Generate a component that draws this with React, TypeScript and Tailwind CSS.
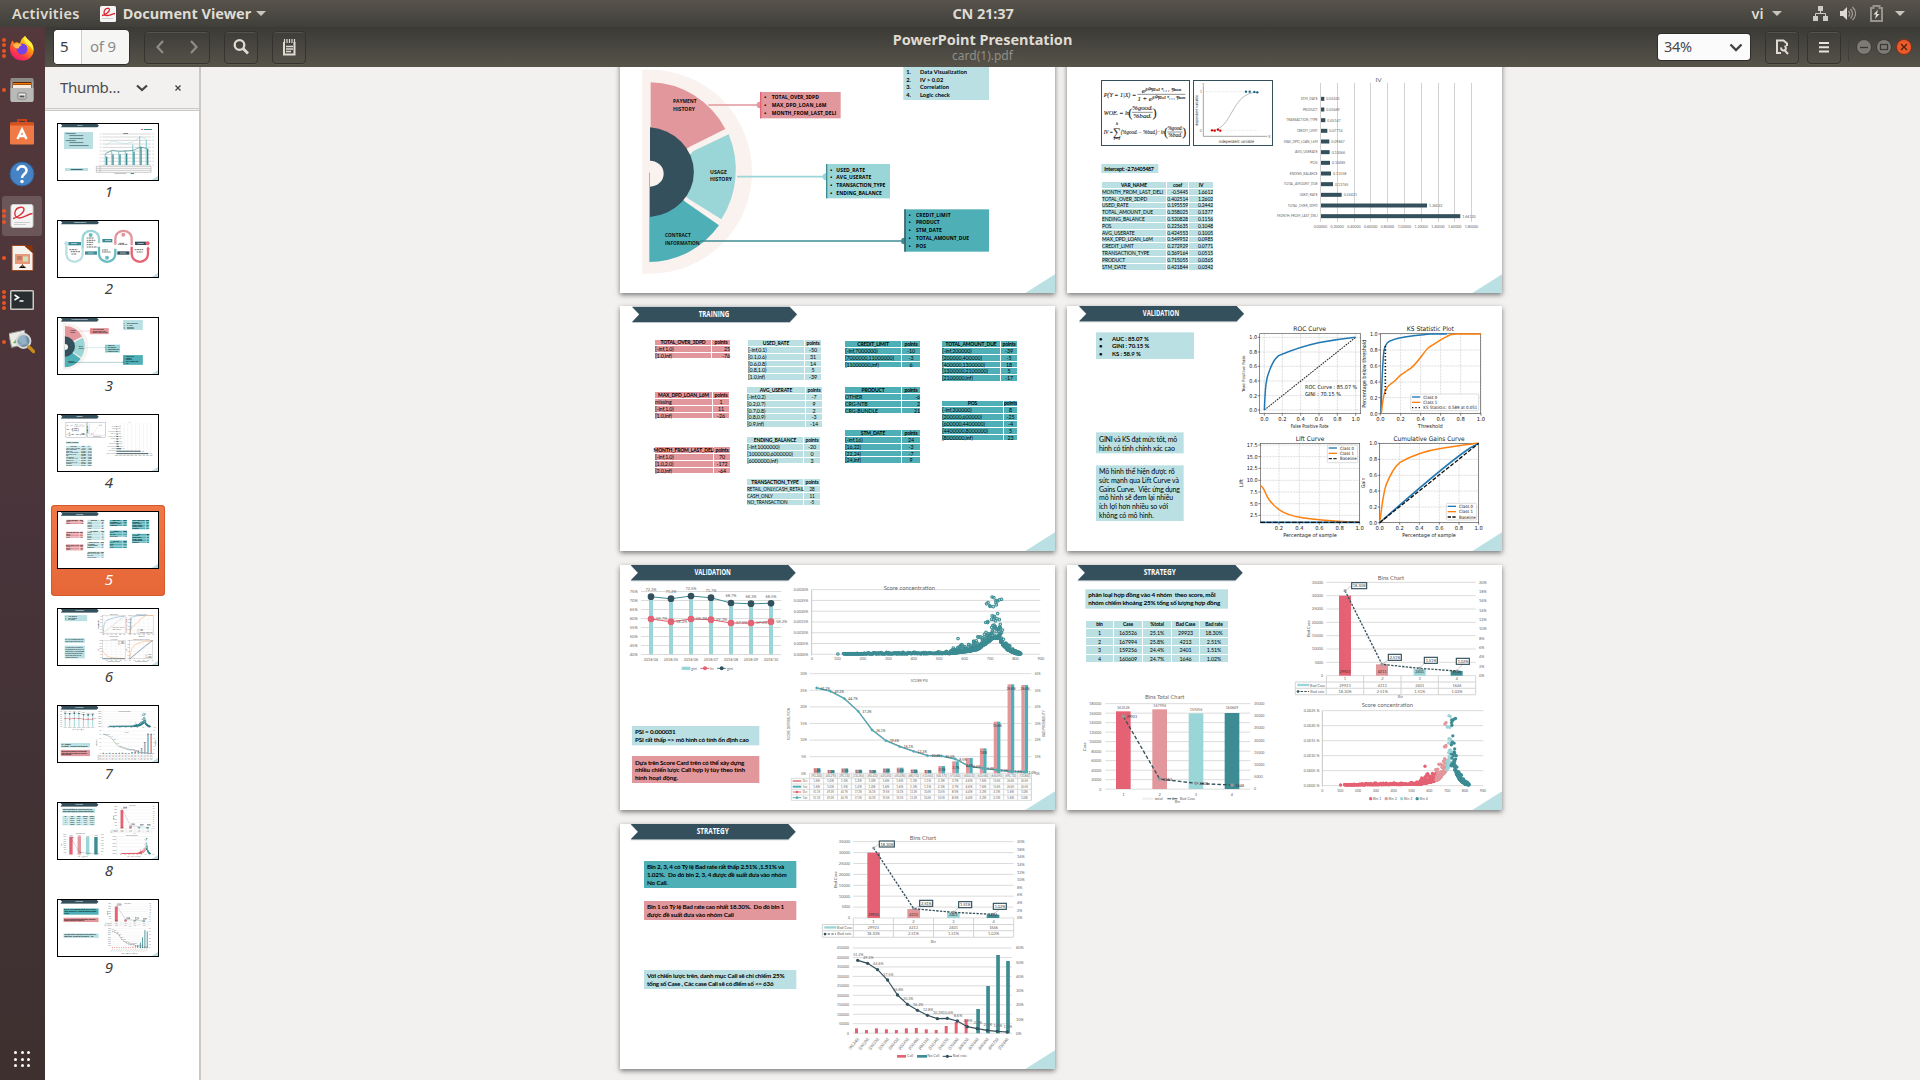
import React, { useLayoutEffect, useRef } from 'react';

const DARK = '#34505c';
const TEAL = '#4fafb7';
const LIGHT = '#bbe0e3';
const MID = '#9ad5d7';
const PINK = '#e2979c';
const RED = '#e46274';
const DEEP = '#3d8c93';
const GRID = '#d4d4d4';

/* Text whose letter spacing is adjusted so that it fills a given width. */
function Fit({ w, className = '', children }: { w?: number; className?: string; children: string }) {
  const ref = useRef<HTMLSpanElement>(null);
  useLayoutEffect(() => {
    const el = ref.current;
    if (!el || !w) return;
    el.style.letterSpacing = '0px';
    const spacing = (w - el.offsetWidth) / children.length;
    el.style.letterSpacing = `${spacing}px`;
  }, [w, children]);
  return (
    <span ref={ref} className={`inline-block whitespace-pre ${className}`}>
      {children}
    </span>
  );
}

type TProps = {
  x: number; y: number; s?: number; w?: number; a?: 'start' | 'middle' | 'end';
  b?: boolean; f?: string; r?: number; font?: string; i?: boolean; children: React.ReactNode;
};
function T({ x, y, s = 13, w, a = 'middle', b, f = '#666', r, font, i, children }: TProps) {
  return (
    <text x={x} y={y + s * 0.35} fontSize={s} textAnchor={a} fontWeight={b ? 700 : 400} fill={f} textLength={w}
      lengthAdjust="spacingAndGlyphs" fontStyle={i ? 'italic' : undefined} fontFamily={font}
      transform={r ? `rotate(${r} ${x} ${y})` : undefined}>
      {children}
    </text>
  );
}

/* ---------- slide building blocks ---------- */

function Canvas({ ox, oy, children }: { ox: number; oy: number; children: React.ReactNode }) {
  return (
    <div className="relative h-[735px] w-[1305px] overflow-hidden bg-white font-['Lato','Noto_Sans',sans-serif] text-black">
      <div className="absolute" style={{ left: -ox, top: -oy }}>{children}</div>
      <svg className="absolute right-0 bottom-0" width="89" height="56"><path d="M0 56 89 0V56Z" fill={LIGHT} /></svg>
    </div>
  );
}

function Art({ children }: { children: React.ReactNode }) {
  return (
    <svg className="absolute top-0 left-0 overflow-visible" width="1340" height="780" fontFamily="Lato, 'Noto Sans', sans-serif">
      {children}
    </svg>
  );
}

function Banner({ x, y, w, children }: { x: number; y: number; w: number; children: string }) {
  return (
    <>
      <path d={`M${x} ${y + 2}h473l22 23-22 24H${x}l22-24Z`} fill="#8d9ca3" opacity=".6" />
      <path d={`M${x} ${y}h473l22 23-22 23H${x}l22-23Z`} fill={DARK} />
      <T x={x + 246} y={y + 23} s={24} w={w} b f="#fff" font="'Open Sans'">{children}</T>
    </>
  );
}

type Line = [string, number];
function Box({ x, y, w, h, bg, lines, size, lh, pt, bold, bullets, indent = 0, className = '' }: {
  x: number; y: number; w: number; h: number; bg: string; lines: Line[]; size: number; lh: number; pt: number;
  bold?: boolean; bullets?: string[]; indent?: number; className?: string;
}) {
  return (
    <div className={`absolute ${className}`} style={{ left: x, top: y, width: w, height: h, background: bg, paddingTop: pt, fontSize: size, lineHeight: `${lh}px` }}>
      {lines.map(([t, tw], i) => (
        <div key={i} className={`flex pl-[9px] ${bold ? 'font-bold' : ''}`} style={{ height: lh }}>
          {bullets && <span className="shrink-0" style={{ width: indent }}>{bullets[i]}</span>}
          {t && <Fit w={tw}>{t}</Fit>}
        </div>
      ))}
    </div>
  );
}

const snap = (v: number) => Math.round(v / 3) * 3;

/* Table whose row and column edges fall on whole device pixels of the page view. */
function Grid({ x, y, cols, bg, head, rows, hh = 18, rh = 17.4, align = 'center', size = 16 }: {
  x: number; y: number; cols: number[]; bg: string; head: string[]; rows: string[][]; hh?: number; rh?: number; align?: string; size?: number;
}) {
  const tops = Array.from({ length: rows.length + 2 }, (_, i) => (i === 0 ? 0 : snap(hh + 3 + (rh + 3) * (i - 1))));
  const heights = tops.slice(1).map((t, i) => `${t - tops[i] - 3}px`).join(' ');
  return (
    <div className="absolute grid gap-[3px] leading-none" style={{ left: snap(x), top: snap(y), fontSize: size, gridTemplateColumns: cols.map((c) => `${snap(c)}px`).join(' '), gridTemplateRows: heights }}>
      {head.map((c, i) => (
        <div key={i} className="flex items-center justify-center text-[15px] font-bold whitespace-nowrap tracking-[-0.45px]" style={{ background: bg }}>{c}</div>
      ))}
      {rows.flatMap((r, j) => r.map((c, i) => (
        <div key={`${j}-${i}`} className="flex items-center whitespace-nowrap tracking-[-0.3px]" style={{ background: bg, justifyContent: i === 0 && align !== 'all' ? 'start' : align === 'right' ? 'end' : 'center' }}>{c}</div>
      )))}
    </div>
  );
}

/* ---------- slides ---------- */

function Slide1() {
  const xs = [318, 337, 358, 378, 400, 421, 441];
  return (
    <Canvas ox={0} oy={0}>
      <Art>
        <g transform="scale(4.35) translate(-174 -372)">
          <path d="M182 372h110l5 5-5 5H182l5-5Z" fill={DARK} />
          <T x={240} y={377} s={6} b f="#fff">DATA</T>
          <rect x={192} y={396} width={87} height={51} fill={LIGHT} />
          {[401, 407, 415, 422, 428, 437].map((y, i) => <rect key={y} x={i % 3 ? 208 : 197} y={y - 1} width={i === 5 ? 58 : i % 3 ? 42 : 30} height={2.2} fill="#40656a" />)}
          <rect x={195} y={504} width={69} height={9} fill={LIGHT} />
          <rect x={212} y={507} width={36} height={3} fill="#40656a" />
          <rect x={423} y={387} width={7} height={3} fill={RED} /><rect x={432} y={387} width={24} height={3} fill={DEEP} />
          {[402, 411, 421, 432, 442, 453, 463, 474, 484, 495].map((y) => <path key={y} d={`M307 ${y}H453M299 ${y}h5M457 ${y}h5`} stroke="#b5b5b5" strokeWidth="1.600" />)}
          <rect x={370} y={399} width={14} height={3} fill="#888" />
          {xs.map((x, i) => (
            <g key={x}><rect x={x - 4} y={[462, 452, 455, 450, 434, 408, 420][i]} width={4} height={495 - [462, 452, 455, 450, 434, 408, 420][i]} fill={MID} />
              <rect x={x} y={[470, 463, 463, 460, 455, 441, 446][i]} width={4} height={495 - [470, 463, 463, 460, 455, 441, 446][i]} fill={DEEP} /></g>
          ))}
          <polyline points="316,436 337,423 358,428 378,431 400,425 421,410 441,419" fill="none" stroke={LIGHT} strokeWidth="2" />
          <polyline points="316,461 337,451 358,454 378,453 400,451 421,441 441,446" fill="none" stroke={DEEP} strokeWidth="2" />
          <path d="M289 499H453M289 505H453M289 511H453M289 517H453M289 499v18M300 499v18M453 499v18" stroke="#aaa" strokeWidth="1.800" />
          <rect x={392} y={519} width={10} height={3} fill={DEEP} /><rect x={343} y={520} width={36} height={2} fill="#aaa" />
        </g>
      </Art>
    </Canvas>
  );
}

function Slide2() {
  return (
    <Canvas ox={0} oy={0}>
      <Art>
        <g transform="scale(4.35) translate(-174 -63)" fill="none">
          <path d="M182 63h110l5 5-5 5H182l5-5Z" fill={DARK} />
          <T x={240} y={68} s={6} w={36} b f="#fff">PREPROCESSING</T>
          <g strokeWidth="7">
            <path d="M199 130v30c0 34 49 34 49 0v-14" stroke={LIGHT} />
            <path d="M248 146v-30c0-31 49-31 49 0v14" stroke={MID} />
            <path d="M297 140v20c0 34 49 34 49 0v-14" stroke="#68bcc2" />
            <path d="M346 134v-18c0-31 49-31 49 0v20" stroke={PINK} />
            <path d="M395 140v20c0 34 49 34 49 0v-14" stroke={RED} />
          </g>
          <path d="M439 148l5-9 6 9Z" fill={RED} />
          {[[205, 126, 38, DEEP], [307, 117, 30, DEEP], [255, 154, 36, DEEP], [352, 154, 36, DARK], [405, 125, 34, DARK]].map(([x, y, w, c], i) => (
            <g key={i}><rect x={x as number} y={y as number} width={w as number} height={10} fill={c as string} /><rect x={(x as number) + 8} y={(y as number) + 4} width={18} height={2} fill="#dde" /></g>
          ))}
          {[[199, 130, LIGHT], [272, 105, '#68bcc2'], [321, 173, '#68bcc2'], [370, 104, PINK], [443, 130, RED]].map(([x, y, c], i) => <circle key={i} cx={x as number} cy={y as number} r={6} fill={c as string} />)}
          <path d="M208 149h24M212 155h28M214 162h16M260 114h22M260 121h26M260 127h20M260 134h18M260 141h32M306 150h18M306 156h26M354 133h28M358 130h14M404 149h26M410 156h18" stroke="#333" strokeWidth="2" strokeDasharray="5 1.2 8 1" />
        </g>
      </Art>
    </Canvas>
  );
}

function Slide3() {
  return (
    <Canvas ox={15} oy={-36}>
      <Art>
        <Banner x={51} y={-36} w={210}>FEATURE SELECTION</Banner>
        <path d="M81 29H105A306 306 0 0 1 105 641H81Z" fill="#faf2ef" />
        <path d="M107 67A261 269 0 0 1 331 207L227 259 107 335Z" fill={PINK} />
        <path d="M341 223A261 269 0 0 1 319 478L217 414 180 337 234 274Z" fill={MID} />
        <path d="M312 496A261 269 0 0 1 103 606V337L215 428Z" fill={TEAL} />
        <path d="M105 202A144 135 0 0 1 105 471Z" fill={DARK} />
        <path d="M105 302A41 39 0 0 1 105 380Z" fill="#faf2ef" />
        <path d="M280 135H433" stroke={PINK} strokeWidth="5" />
        <circle cx="435" cy="135" r="10" fill={PINK} />
        <path d="M366 350H628" stroke={MID} strokeWidth="5" />
        <circle cx="633" cy="350" r="10" fill={MID} />
        <path d="M255 543H866" stroke={DEEP} strokeWidth="5" />
        <circle cx="868" cy="543" r="10" fill={DEEP} />
        <g fontFamily="'Open Sans'">
          <T x={174} y={125} a="start" s={15} w={71} b f="#111">PAYMENT</T>
          <T x={174} y={149} a="start" s={15} w={66} b f="#111">HISTORY</T>
          <T x={285} y={338} a="start" s={15} w={51} b f="#111">USAGE</T>
          <T x={285} y={359} a="start" s={15} w={66} b f="#111">HISTORY</T>
          <T x={150} y={527} a="start" s={15} w={77} b f="#111">CONTRACT</T>
          <T x={150} y={551} a="start" s={15} w={104} b f="#111">INFORMATION</T>
        </g>
      </Art>
      <Box x={865} y={-10} w={257} h={130} bg={LIGHT} size={17} lh={23} pt={11} bold indent={41} bullets={['', '1.', '2.', '3.', '4.']} lines={[['', 0], ['Data Visualization', 142], ['IV > 0,02', 70], ['Correlation', 87], ['Logic check', 90]]} />
      <Box x={435} y={96} w={242} h={79} bg={PINK} className="border-l-4 border-[#e46274] font-['Open_Sans']" size={15} lh={23} pt={5} bold indent={22} bullets={['•', '•', '•']} lines={[['TOTAL_OVER_3DPD', 142], ['MAX_DPD_LOAN_L6M', 165], ['MONTH_FROM_LAST_DELI', 194]]} />
      <Box x={633} y={312} w={192} h={103} bg={MID} className="border-l-4 border-[#3d8c93] font-['Open_Sans']" size={15} lh={23} pt={6} bold indent={18} bullets={['•', '•', '•', '•']} lines={[['USED_RATE', 87], ['AVG_USERATE', 105], ['TRANSACTION_TYPE', 147], ['ENDING_BALANCE', 136]]} />
      <Box x={868} y={448} w={254} h={127} bg={TEAL} className="border-l-4 border-[#34505c] font-['Open_Sans']" size={15} lh={23.2} pt={5} bold indent={22} bullets={['•', '•', '•', '•', '•']} lines={[['CREDIT_LIMIT', 104], ['PRODUCT', 71], ['STM_DATE', 78], ['TOTAL_AMOUNT_DUE', 159], ['POS', 31]]} />
    </Canvas>
  );
}

const IV: [string, number, string, number][] = [
  ['STM_DATE', 10, '0.03425', 51], ['PRODUCT', 10, '0.03649', 44], ['TRANSACTION_TYPE', 13, '0.05147', 94], ['CREDIT_LIMIT', 19, '0.07714', 62],
  ['MAX_DPD_LOAN_L6M', 25, '0.09847', 102], ['AVG_USERATE', 26, '0.10046', 68], ['POS', 27, '0.10485', 22], ['ENDING_BALANCE', 30, '0.11558', 84],
  ['TOTAL_AMOUNT_DUE', 36, '0.13765', 102], ['USED_RATE', 62, '0.24421', 54], ['TOTAL_OVER_3DPD', 318, '1.26022', 90], ['MONTH_FROM_LAST_DELI', 418, '1.66120', 122],
];

function Slide4() {
  const F = '#222';
  const serif = "'Liberation Serif'";
  return (
    <Canvas ox={21} oy={-36}>
      <Art>
        <Banner x={57} y={-36} w={80}>MODEL</Banner>
        <rect x="124.500" y="61.500" width="264" height="195" fill="#fff" stroke={DARK} strokeWidth="3" />
        <rect x="400.500" y="61.500" width="237" height="195" fill="#fff" stroke={DARK} strokeWidth="3" />
        <g fontFamily={serif} stroke="#222" strokeWidth=".3">
          <T x={131} y={104} a="start" s={20} w={97} i f={F}>P(Y = 1|X) =</T>
          <T x={304} y={91} s={20} w={118} i f={F}>eᵝ⁰⁺ᵝ¹ˣ¹⁺⋯⁺ᵝⁿˣⁿ</T>
          <path d="M232 103H376M216 157H278M322 216H368" stroke={F} strokeWidth="1.500" />
          <T x={304} y={115} s={20} w={143} i f={F}>1 + eᵝ⁰⁺ᵝ¹ˣ¹⁺⋯⁺ᵝⁿˣⁿ</T>
          <T x={131} y={157} a="start" s={19} w={78} i f={F}>WOEᵢ = ln</T>
          <T x={211} y={157} s={38} f={F}>(</T><T x={284} y={157} s={38} f={F}>)</T>
          <T x={247} y={145} s={18} w={60} i f={F}>%goodᵢ</T>
          <T x={247} y={168} s={18} w={54} i f={F}>%badᵢ</T>
          <T x={131} y={216} a="start" s={18} w={28} i f={F}>IV =</T>
          <T x={171} y={215} s={34} f={F}>∑</T>
          <T x={171} y={191} s={13} i f={F}>k</T><T x={171} y={235} s={13} i f={F}>i=1</T>
          <T x={182} y={216} a="start" s={17} w={132} i f={F}>(%goodᵢ − %badᵢ) · ln</T>
          <T x={318} y={216} s={36} f={F}>(</T><T x={373} y={216} s={36} f={F}>)</T>
          <T x={345} y={204} s={16} w={44} i f={F}>%goodᵢ</T>
          <T x={345} y={226} s={16} w={40} i f={F}>%badᵢ</T>
        </g>
        <path d="M430 78V229H622" stroke="#777" strokeWidth="2" fill="none" />
        <path d="M430 95H556M482 211H594" stroke="#aaa" strokeDasharray="2 2" fill="none" />
        <path d="M453 211C520 211 510 97 594 96" stroke="#777" strokeWidth="1.500" fill="none" />
        {[[456, 211], [464, 212], [474, 209], [481, 212]].map(([x, y]) => <circle key={x} cx={x} cy={y} r="3.500" fill="#c00" />)}
        {[[558, 95], [569, 95], [583, 96], [592, 97]].map(([x, y]) => <circle key={x} cx={x} cy={y} r="3.500" fill="#156082" />)}
        <T x={430} y={73} s={10}>Y</T><T x={423} y={95} s={10}>1</T><T x={422} y={211} s={10}>0</T><T x={628} y={230} s={10}>X</T>
        <T x={529} y={243} s={13} w={106} font="'DejaVu Sans'" f="#333">independent variable</T>
        <T x={411} y={151} s={12} w={92} r={-90} font="'DejaVu Sans'" f="#333">dependent variable</T>
        {Array.from({ length: 10 }, (_, i) => (
          <g key={i}><path d={`M${781.500 + snap(i * 50.4)} 68V485`} stroke="#d2d2d2" strokeWidth="3" />
            <T x={781 + i * 50.4} y={500} s={12} w={40}>{`${(i * 0.2).toFixed(5)}`}</T></g>
        ))}
        <T x={956} y={60} s={18} w={19}>IV</T>
        {IV.map(([n, w, v, tw], i) => (
          <g key={n}>
            <rect x={783} y={110.500 + i * 32} width={w} height={12} fill={DARK} />
            <T x={773} y={116 + i * 32} a="end" s={12} w={tw}>{n}</T>
            <T x={783 + w + 6} y={117 + i * 32} a="start" s={12} w={40}>{v}</T>
          </g>
        ))}
      </Art>
      <Box x={124} y={312} w={171} h={27} bg={LIGHT} size={16} lh={27} pt={0} bold lines={[['Intercept: -2.76405487', 148]]} />
      <Grid x={126} y={366} cols={[192, 63, 72]} bg={LIGHT} align="right" head={['VAR_NAME', 'coef', 'IV']} rows={[
        ['MONTH_FROM_LAST_DELI', '-0.5445', '1.6612'], ['TOTAL_OVER_3DPD', '0.402514', '1.2602'], ['USED_RATE', '0.195559', '0.2442'],
        ['TOTAL_AMOUNT_DUE', '0.358025', '0.1377'], ['ENDING_BALANCE', '0.520828', '0.1156'], ['POS', '0.225635', '0.1048'],
        ['AVG_USERATE', '0.424553', '0.1005'], ['MAX_DPD_LOAN_L6M', '0.549952', '0.0985'], ['CREDIT_LIMIT', '0.272929', '0.0771'],
        ['TRANSACTION_TYPE', '0.369164', '0.0515'], ['PRODUCT', '0.715055', '0.0365'], ['STM_DATE', '0.421844', '0.0342'],
      ]} size={15} />
    </Canvas>
  );
}

function Slide5() {
  return (
    <Canvas ox={15} oy={18}>
      <Art><Banner x={51} y={20} w={92}>TRAINING</Banner></Art>
      <Grid x={120} y={120} cols={[168, 54]} bg={PINK} align="right" hh={16} rh={16} head={['TOTAL_OVER_3DPD', 'points']} rows={[['[-inf,1.0)', '25'], ['[1.0,inf)', '-76']]} />
      <Grid x={120} y={276} cols={[171, 49]} bg={PINK} head={['MAX_DPD_LOAN_L6M', 'points']} rows={[['missing', '1'], ['[-inf,1.0)', '11'], ['[1.0,inf)', '-26']]} />
      <Grid x={120} y={441} cols={[174, 49]} bg={PINK} head={['MONTH_FROM_LAST_DELI', 'points']} rows={[['[-inf,1.0)', '70'], ['[1.0,2.0)', '-172'], ['[2.0,inf)', '-64']]} />
      <Grid x={399} y={120} cols={[168, 49]} bg={LIGHT} head={['USED_RATE', 'points']} rows={[['[-inf,0.1)', '-50'], ['[0.1,0.6)', '31'], ['[0.6,0.8)', '14'], ['[0.8,1.0)', '5'], ['[1.0,inf)', '-39']]} />
      <Grid x={396} y={261} cols={[174, 49]} bg={LIGHT} head={['AVG_USERATE', 'points']} rows={[['[-inf,0.2)', '-7'], ['[0.2,0.7)', '9'], ['[0.7,0.8)', '2'], ['[0.8,0.9)', '-3'], ['[0.9,inf)', '-14']]} />
      <Grid x={396} y={411} cols={[169, 49]} bg={LIGHT} head={['ENDING_BALANCE', 'points']} rows={[['[-inf,1000000)', '-20'], ['[1000000,6000000)', '0'], ['[6000000,inf)', '3']]} />
      <Grid x={396} y={537} cols={[169, 49]} bg={LIGHT} head={['TRANSACTION_TYPE', 'points']} rows={[['RETAIL_ONLY,CASH_RETAIL', '28'], ['CASH_ONLY', '11'], ['NO_TRANSACTION', '-5']]} size={14} />
      <Grid x={690} y={123} cols={[168, 54]} bg={TEAL} head={['CREDIT_LIMIT', 'points']} rows={[['[-inf,7000000)', '-10'], ['[7000000,11000000)', '-3'], ['[11000000,inf)', '6']]} />
      <Grid x={690} y={261} cols={[168, 54]} bg={TEAL} align="right" head={['PRODUCT', 'points']} rows={[['OTHER', '-6'], ['CRG-NTB', '2'], ['CRG-BUNDLE', '21']]} />
      <Grid x={690} y={390} cols={[168, 54]} bg={TEAL} head={['STM_DATE', 'points']} rows={[['[-inf,16)', '24'], ['[16,22)', '-3'], ['[22,24)', '-7'], ['[24,inf)', '9']]} />
      <Grid x={981} y={123} cols={[174, 48]} bg={TEAL} head={['TOTAL_AMOUNT_DUE', 'points']} rows={[['[-inf,200000)', '-39'], ['[200000,400000)', '-5'], ['[400000,1300000)', '18'], ['[1300000,2100000)', '5'], ['[2100000,inf)', '-17']]} />
      <Grid x={981} y={303} cols={[183, 39]} bg={TEAL} hh={16} head={['POS', 'points']} rows={[['[-inf,200000)', '8'], ['[200000,600000)', '-25'], ['[600000,4400000)', '-4'], ['[4400000,8000000)', '5'], ['[8000000,inf)', '23']]} />
    </Canvas>
  );
}

function Plot({ x0, x1, y0, y1, xt, yt, title, tx, xl, yl, ylw, yls = 15, xlx, xly, ylx, titleW, xlw }: {
  x0: number; x1: number; y0: number; y1: number; xt: [number, string][]; yt: [number, string][]; title: string; tx: number; titleW: number;
  xl: string; yl: string; ylw: number; yls?: number; xlx: number; xly: number; ylx: number; xlw: number;
}) {
  return (
    <>
      {xt.map(([x]) => <path key={x} d={`M${x} ${y0}V${y1}`} stroke="#ccc" strokeWidth="2" strokeDasharray="6 3" />)}
      {yt.map(([y]) => <path key={y} d={`M${x0} ${y}H${x1}`} stroke="#ccc" strokeWidth="2" strokeDasharray="6 3" />)}
      <rect x={x0} y={y0} width={x1 - x0} height={y1 - y0} fill="none" stroke="#555" strokeWidth="2" />
      {xt.map(([x, l]) => <g key={x}><path d={`M${x} ${y1}v6`} stroke="#444" strokeWidth="2" /><T x={x} y={y1 + 17} s={16} w={25} f="#222">{l}</T></g>)}
      {yt.map(([y, l]) => <g key={y}><path d={`M${x0} ${y}h-6`} stroke="#444" strokeWidth="2" /><T x={x0 - 8} y={y} a="end" s={16} w={l.length > 3 ? 33 : 23} f="#222">{l}</T></g>)}
      <T x={tx} y={y0 - 15} s={19} w={titleW} f="#222">{title}</T>
      <T x={xlx} y={xly} s={16} w={xlw} f="#222">{xl}</T>
      <T x={ylx} y={(y0 + y1) / 2} s={yls} w={ylw} r={-90} f="#222">{yl}</T>
    </>
  );
}

function Legend({ x, y, w, h, rows }: { x: number; y: number; w: number; h: number; rows: [string, string, string, number][] }) {
  return (
    <>
      <rect x={x} y={y} width={w} height={h} rx="3" fill="#fff" fillOpacity=".85" stroke="#ccc" strokeWidth="2" />
      {rows.map(([l, c, dash, tw], i) => (
        <g key={l}><path d={`M${x + 4} ${y + 9 + i * 16}h25`} stroke={c} strokeWidth="4" strokeDasharray={dash} />
          <T x={x + 38} y={y + 9 + i * 16} a="start" s={13} w={tw} f="#222">{l}</T></g>
      ))}
    </>
  );
}

function Slide6() {
  const B = '#1f77b4', O = '#ff7f0e';
  return (
    <Canvas ox={21} oy={18}>
      <Art>
        <Banner x={57} y={18} w={109}>VALIDATION</Banner>
        <g fontFamily="'DejaVu Sans'" fill="none">
          <Plot x0={599} x1={902} y0={101} y1={341} title="ROC Curve" tx={749} titleW={98} xl="False Positive Rate" xlx={749} xly={377} xlw={113} yl="True Positive Rate" ylx={551} ylw={110} yls={12}
            xt={[[613, '0.0'], [667, '0.2'], [722, '0.4'], [777, '0.6'], [832, '0.8'], [887, '1.0']]} yt={[[112, '1.0'], [156, '0.8'], [199, '0.6'], [243, '0.4'], [287, '0.2'], [330, '0.0']]} />
          <path d="M613 330L887 112" stroke="#222" strokeWidth="3" strokeDasharray="5 3" />
          <path d="M613 330C616 260 618 235 628 213C636 190 648 173 656 167C690 152 720 140 775 128C820 120 850 116 887 112" stroke={B} strokeWidth="4.500" />
          <T x={735} y={260} a="start" s={16} w={157} f="#222">ROC Curve : 85.07 %</T>
          <T x={735} y={281} a="start" s={16} w={108} f="#222">GINI : 70.15 %</T>
          <Plot x0={961} x1={1262} y0={101} y1={341} title="KS Statistic Plot" tx={1111} titleW={141} xl="Threshold" xlx={1111} xly={379} xlw={75} yl="Percentage below threshold" ylx={911} ylw={204} yls={16}
            xt={[[961, '0.0'], [1022, '0.2'], [1082, '0.4'], [1142, '0.6'], [1202, '0.8'], [1263, '1.0']]} yt={[[102, '1.0'], [150, '0.8'], [198, '0.6'], [246, '0.4'], [293, '0.2'], [341, '0.0']]} />
          <path d="M963 341C966 230 967 190 972 150C978 128 984 124 1000 119C1030 108 1070 106 1110 102H1160" stroke={B} strokeWidth="4.500" />
          <path d="M964 341C968 300 972 275 978 269C984 252 990 256 1004 243C1025 218 1040 213 1052 205C1080 182 1090 155 1108 141C1135 126 1145 115 1160 110C1170 101 1185 102 1200 102H1263" stroke={O} strokeWidth="4.500" />
          <path d="M976 138V282" stroke="#111" strokeWidth="5" strokeDasharray="4 6" />
          <Legend x={1052} y={282} w={204} h={50} rows={[['Class 0', B, '', 42], ['Class 1', O, '', 42], ['KS Statistic: 0.589 at 0.051', '#111', '4 6', 162]]} />
          <Plot x0={601} x1={899} y0={430} y1={668} title="Lift Curve" tx={750} titleW={86} xl="Percentage of sample" xlx={750} xly={706} xlw={161} yl="Lift" ylx={545} ylw={24}
            xt={[[657, '0.2'], [718, '0.4'], [778, '0.6'], [839, '0.8'], [899, '1.0']]} yt={[[435, '17.5'], [470, '15.0'], [505, '12.5'], [541, '10.0'], [576, '7.5'], [611, '5.0'], [646, '2.5']]} />
          <path d="M601 558C612 557 613 580 628 600C650 630 680 650 750 656C800 662 850 665 899 666" stroke={O} strokeWidth="4.500" />
          <path d="M601 667H899" stroke={B} strokeWidth="5" /><path d="M601 667H899" stroke="#111" strokeWidth="4" strokeDasharray="14 5" />
          <Legend x={802} y={435} w={91} h={53} rows={[['Class 0', B, '', 42], ['Class 1', O, '', 42], ['Baseline', '#333', '10 4', 50]]} />
          <Plot x0={959} x1={1256} y0={430} y1={668} title="Cumulative Gains Curve" tx={1107} titleW={213} xl="Percentage of sample" xlx={1107} xly={706} xlw={161} yl="Gain" ylx={911} ylw={32}
            xt={[[959, '0.0'], [1019, '0.2'], [1078, '0.4'], [1138, '0.6'], [1197, '0.8'], [1256, '1.0']]} yt={[[430, '1.0'], [478, '0.8'], [526, '0.6'], [573, '0.4'], [621, '0.2'], [668, '0.0']]} />
          <path d="M959 668C966 620 969 580 979 553C990 525 1002 502 1020 487C1060 464 1110 450 1150 444C1200 437 1230 432 1256 430" stroke={O} strokeWidth="4.500" />
          <path d="M959 668C1060 580 1160 490 1230 444L1256 430" stroke={B} strokeWidth="4.500" />
          <path d="M959 668L1256 430" stroke="#111" strokeWidth="4" strokeDasharray="12 5" />
          <Legend x={1159} y={610} w={91} h={50} rows={[['Class 0', B, '', 42], ['Class 1', O, '', 42], ['Baseline', '#111', '10 4', 50]]} />
        </g>
      </Art>
      <Box x={108} y={97} w={294} h={80} bg={LIGHT} size={18} lh={22.500} pt={7} bold indent={39} bullets={['•', '•', '•']} lines={[['AUC : 85.07 %', 110], ['GINI : 70.15 %', 112], ['KS : 58.9 %', 86]]} />
      <Box x={108} y={397} w={263} h={63} bg={LIGHT} size={21} lh={27} pt={6} lines={[['GINI và KS đạt mức tốt, mô', 234], ['hình có tính chính xác cao', 228]]} />
      <Box x={108} y={496} w={263} h={167} bg={LIGHT} size={21} lh={26} pt={6} lines={[['Mô hình thể hiện được rõ', 227], ['sức mạnh qua Lift Curve và', 239], ['Gains Curve.  Việc ứng dụng', 242], ['mô hình sẽ đem lại nhiều', 222], ['ích lợi hơn nhiều so với', 207], ['không có mô hình.', 164]]} />
    </Canvas>
  );
}

/* Score-concentration cloud as [score, density 0..1] pairs. */
const ENV: [number, number][] = [[100, 0], [125, 0.01], [300, 0.03], [420, 0.03], [540, 0.05], [560, 0.14], [575, 0.2], [600, 0.15], [625, 0.18], [645, 0.3], [665, 0.38], [680, 0.54], [690, 0.9], [710, 1], [728, 0.97], [740, 0.6], [755, 0.28], [775, 0.15], [800, 0.06], [825, 0.01]];
const FLOOR: [number, number][] = [[100, 0], [540, 0.01], [600, 0.04], [650, 0.08], [680, 0.17], [710, 0.28], [735, 0.28], [750, 0.16], [770, 0.07], [800, 0.01], [830, 0]];
const at = (curve: [number, number][], s: number) => {
  const k = curve.findIndex(([x]) => x > s);
  const [xa, ya] = curve[k - 1];
  const [xb, yb] = curve[k];
  return ya + ((yb - ya) * (s - xa)) / (xb - xa);
};
const CLOUD: [number, number][] = (() => {
  let seed = 7;
  const rnd = () => { seed = (seed * 16807) % 2147483647; return seed / 2147483647; };
  const out: [number, number][] = [[102, 0]];
  for (let s = 124; s <= 821; s += s > 540 ? 0.6 : 2) {
    const lo = at(FLOOR, s);
    out.push([s + rnd() * 3, lo + Math.max(0, at(ENV, s) - lo) * rnd() ** 4]);
  }
  out.push([693, 0.9], [709, 1], [716, 0.99], [738, 0.95], [746, 0.96], [724, 0.9], [687, 0.88], [575, 0.27]);
  return out;
})();

const SX = Array.from({ length: 16 }, (_, i) => 605 + i * 41.55);
const SY = [384, 394, 416, 454, 510, 542, 560, 574, 587, 588, 597, 619, 625, 630, 634, 636];
const SH = [16, 10, 15, 11, 10, 15, 17, 12, 10, 22, 36, 46, 75, 155, 267, 265];
const SP = ['51.1%', '49.2%', '44.7%', '37.2%', '26.1%', '19.6%', '16.1%', '13.2%', '10.6%', '10.5%', '8.5%', '4.4%', '3.2%', '2.3%', '1.6%', '1.0%'];
const SD = ['1.6%', '1.0%', '1.5%', '1.2%', '1.0%', '1.6%', '1.6%', '1.3%', '1.1%', '2.3%', '3.7%', '4.6%', '7.6%', '15.6%', '26.6%', '26.6%'];
const BANDS = ['[90,240)', '[240,290)', '[290,330)', '[330,360)', '[360,420)', '[420,450)', '[450,480)', '[480,510)', '[510,540)', '[540,570)', '[570,600)', '[600,630)', '[630,660)', '[660,690)', '[690,720)', '[720,840)'];

function Slide7() {
  const gx = [108, 168, 228, 288, 348, 408, 468];
  const gy = [110, 116, 108, 113, 129, 131, 130];
  const ky = [177, 185, 177, 179, 189, 189, 185];
  return (
    <Canvas ox={15} oy={15}>
      <Art>
        <Banner x={47} y={15} w={109}>VALIDATION</Banner>
        {Array.from({ length: 8 }, (_, i) => (
          <g key={i}><path d={`M78 ${94.500 + i * 27}H499`} stroke={GRID} strokeWidth="2.500" /><T x={56} y={95 + i * 27} s={12} w={24}>{`${75 - i * 5}%`}</T></g>
        ))}
        {gx.map((x, i) => <g key={x}><rect x={x - 6} y={gy[i]} width={12} height={283 - gy[i]} fill={MID} /><T x={x} y={299} s={12} w={43}>{`2018/${['04', '05', '06', '07', '08', '09', '10'][i]}`}</T></g>)}
        <polyline points={gx.map((x, i) => `${x},${gy[i]}`).join(' ')} fill="none" stroke={DEEP} strokeWidth="3" />
        <polyline points={gx.map((x, i) => `${x},${ky[i]}`).join(' ')} fill="none" stroke={RED} strokeWidth="3" />
        {gx.map((x, i) => (
          <g key={x}><circle cx={x} cy={gy[i]} r="10" fill={DARK} /><circle cx={x} cy={ky[i]} r="10" fill={RED} />
            <T x={x} y={gy[i] - 21} s={12} w={33}>{['72.3%', '71.2%', '72.5%', '71.7%', '68.7%', '68.3%', '68.5%'][i]}</T>
            <T x={x + 15} y={ky[i]} a="start" s={12} w={34}>{['59.7%', '58.2%', '59.7%', '59.3%', '57.5%', '57.5%', '58.2%'][i]}</T></g>
        ))}
        <rect x={200} y={320} width={26} height={10} fill={MID} /><T x={229} y={326} a="start" s={13} w={17}>gini</T>
        <path d="M256 325h27" stroke={RED} strokeWidth="3" /><circle cx="270" cy="325" r="6" fill={RED} /><T x={286} y={326} a="start" s={13} w={10}>ks</T>
        <path d="M306 325h27" stroke={DEEP} strokeWidth="3" /><circle cx="320" cy="325" r="6" fill={DARK} /><T x={336} y={326} a="start" s={13} w={18}>gini</T>

        {Array.from({ length: 7 }, (_, i) => (
          <g key={i}><path d={`M590 ${89 + i * 32.300}H1276`} stroke={GRID} strokeWidth="2.500" /><T x={558} y={89 + i * 32.300} s={12} w={43}>{`0.00${30 - i * 5 < 10 ? '0' : ''}${30 - i * 5}%`}</T></g>
        ))}
        <path d="M590 89V286" stroke="#bbb" strokeWidth="2.500" />
        {Array.from({ length: 10 }, (_, i) => <T key={i} x={591 + i * 76.300} y={296} s={12} w={i ? 20 : 6}>{i * 100}</T>)}
        <T x={883} y={84} s={17} w={154}>Score concentration</T>
        {CLOUD.map(([s, d], i) => <circle key={i} cx={591 + s * 0.762} cy={282 - d * 171} r="4" fill={DEEP} fillOpacity=".25" stroke={DEEP} strokeWidth="3" />)}

        {Array.from({ length: 7 }, (_, i) => (
          <g key={i}><path d={`M584 ${341 + i * 49.800}H1249`} stroke={GRID} strokeWidth="2.500" />
            <T x={566} y={341 + i * 49.800} s={12} w={i > 4 ? 14 : 20}>{`${30 - i * 5}%`}</T><T x={1268} y={341 + i * 49.800} s={12} w={i > 5 ? 12 : 17}>{`${60 - i * 10}%`}</T></g>
        ))}
        <T x={913} y={362} s={12} w={51}>SCORE PSI</T>
        <T x={521} y={492} s={11} w={97} r={-90}>SCORE DISTRIBUTION</T>
        <T x={1286} y={491} s={11} w={80} r={-90}>BAD PROBABILITY</T>
        {SX.map((x, i) => <g key={i}><rect x={x - 9} y={640 - SH[i]} width={10} height={SH[i]} fill={PINK} /><rect x={x + 1} y={640 - SH[i]} width={10} height={SH[i]} fill={TEAL} /></g>)}
        <polyline points={SX.map((x, i) => `${x},${SY[i] - 1}`).join(' ')} fill="none" stroke={RED} strokeWidth="3" />
        <polyline points={SX.map((x, i) => `${x},${SY[i]}`).join(' ')} fill="none" stroke={TEAL} strokeWidth="4" />
        {SX.map((x, i) => (
          <g key={i}><path d={`M${x - 5} ${SY[i]}l5-5 5 5-5 5Z`} fill={TEAL} />
            <T x={x + 12} y={SY[i] + 1} a="start" s={11} w={SP[i].length * 5.600} f="#444">{SP[i]}</T>
            <T x={x + 2} y={SH[i] > 60 ? 640 - SH[i] + 12 : 640 - SH[i] / 2} s={11} w={SD[i].length * 5.400} f="#333">{SD[i]}</T></g>
        ))}
        <path d="M529 655H1249M529 672H1249M529 688H1249M529 705H1249M529 721H1249M529 655V721M584 640V721M1249 640V721" stroke={GRID} strokeWidth="2.500" fill="none" />
        {SX.map((x, i) => (
          <g key={i}><path d={`M${x + 21} 640V721`} stroke={GRID} strokeWidth="2.500" />
            <T x={x} y={648} s={9} w={34}>{BANDS[i]}</T>
            {[664, 680, 697, 713].map((y, k) => <T key={y} x={x} y={y} s={10} w={21}>{k < 2 ? SD[i] : SP[i]}</T>)}</g>
        ))}
        <rect x={533} y={660} width={26} height={6} fill={PINK} /><rect x={533} y={677} width={26} height={6} fill={TEAL} />
        <path d="M533 696h26" stroke={RED} strokeWidth="3" /><circle cx="546" cy="696" r="4" fill={RED} />
        <path d="M533 713h26" stroke={TEAL} strokeWidth="3" /><circle cx="546" cy="713" r="4" fill={TEAL} />
        {['Dev', 'Train', 'Dev', 'Train'].map((t, i) => <T key={i} x={570} y={664 + i * 16.400} s={10} w={14}>{t}</T>)}
      </Art>
      <Box x={51} y={498} w={382} h={58} bg={LIGHT} size={19} lh={24} pt={5} bold lines={[['PSI = 0.000031', 122], ['PSI rất thấp => mô hình có tính ổn định cao', 342]]} />
      <Box x={51} y={588} w={382} h={81} bg={PINK} size={19} lh={23} pt={7} bold lines={[['Dựa trên Score Card trên có thể xây dựng', 328], ['nhiều chiến lược Call hợp lý tùy theo tình', 330], ['hình hoạt động.', 129]]} />
    </Canvas>
  );
}

function BinsChart({ gx0, gx1, gy0, step, pct, tableX, rh, px, py, bars, bw, labels, title, titleY, lblX, binY, binX, ax }: {
  gx0: number; gx1: number; gy0: number; step: number; pct: number; tableX: number; rh: number; px: number[]; py: number[]; bars: number[];
  bw: number; labels: [number, number][]; title: number; titleY: number; lblX: number; binY: number; binX: number; ax: number;
}) {
  const base = gy0 + step * 7;
  const names = ['29923', '4213', '2401', '1646'];
  const rates = ['18.30%', '2.51%', '1.51%', '1.02%'];
  const colors = [RED, PINK, MID, DEEP];
  const cw = (gx1 - gx0) / 4;
  return (
    <>
      {Array.from({ length: 8 }, (_, i) => (
        <g key={i}><path d={`M${gx0} ${gy0 + i * step}H${gx1}`} stroke={GRID} strokeWidth="2.500" />
          <T x={gx0 - 10} y={gy0 + i * step} a="end" s={12} w={i === 7 ? 6 : i === 6 ? 25 : 34}>{35000 - i * 5000}</T></g>
      ))}
      {Array.from({ length: 11 }, (_, i) => <T key={i} x={gx1 + 10} y={gy0 + i * pct} a="start" s={12} w={i > 5 ? 16 : 23}>{`${20 - i * 2}%`}</T>)}
      <T x={title} y={titleY} s={18} w={79}>Bins Chart</T>
      <T x={lblX} y={ax} s={13} w={49} r={-90} f="#444">Bad Case</T>
      {px.map((x, i) => <rect key={x} x={x - bw / 2} y={base - bars[i]} width={bw} height={bars[i]} fill={colors[i]} />)}
      <polyline points={px.map((x, i) => `${x},${py[i]}`).join(' ')} fill="none" stroke={DARK} strokeWidth="4" strokeDasharray="7 4" />
      {px.map((x, i) => (
        <g key={x}><path d={`M${x} ${py[i]}L${labels[i][0]} ${labels[i][1] + (i ? 8 : 0)}`} stroke="#999" strokeWidth="1.500" />
          <circle cx={x} cy={py[i]} r="4.500" fill="#999" />
          <rect x={labels[i][0] + (i === 3 ? -20 : 0)} y={labels[i][1] - 9} width={i ? 39 : 45} height={18} fill="#fff" stroke={DARK} strokeWidth="3.500" />
          <T x={labels[i][0] + (i === 3 ? 0 : i ? 20 : 23)} y={labels[i][1]} s={13} w={i ? 32 : 39} f="#333">{rates[i]}</T>
          <T x={x} y={base - 11} s={12} w={i ? 26 : 32} f="#333">{names[i]}</T>
          <T x={gx0 + cw * (i + 0.5)} y={base + rh / 2} s={12}>{i + 1}</T>
          <T x={gx0 + cw * (i + 0.5)} y={base + rh * 1.5} s={12} w={i ? 27 : 34}>{names[i]}</T>
          <T x={gx0 + cw * (i + 0.5)} y={base + rh * 2.5} s={12} w={i ? 33 : 39}>{rates[i]}</T></g>
      ))}
      <path d={`M${tableX} ${base + rh}H${gx1}M${tableX} ${base + rh * 2}H${gx1}M${tableX} ${base + rh * 3}H${gx1}M${tableX} ${base + rh}V${base + rh * 3}M${gx0} ${base}V${base + rh * 3}M${gx0 + cw} ${base}V${base + rh * 3}M${gx0 + cw * 2} ${base}V${base + rh * 3}M${gx0 + cw * 3} ${base}V${base + rh * 3}M${gx1} ${base}V${base + rh * 3}`} stroke={GRID} strokeWidth="3" fill="none" />
      <rect x={tableX + 6} y={base + rh * 1.5 - 4} width={36} height={7} fill={MID} />
      <path d={`M${tableX + 5} ${base + rh * 2.5}h36`} stroke={DARK} strokeWidth="3" strokeDasharray="7 4" /><circle cx={tableX + 8} cy={base + rh * 2.5} r="4" fill={DARK} />
      <T x={gx0 - 3} y={base + rh * 1.5} a="end" s={12} w={46}>Bad Case</T>
      <T x={gx0 - 5} y={base + rh * 2.5} a="end" s={12} w={43}>Bad rate</T>
      <T x={binX} y={binY} s={12} w={15}>Bin</T>
    </>
  );
}

function Slide8() {
  const x = [190, 299, 408, 516];
  const top = [454, 448, 460, 459];
  const ly = [469, 657, 670, 675];
  const colors = [RED, PINK, MID, DEEP];
  return (
    <Canvas ox={21} oy={15}>
      <Art>
        <Banner x={53} y={15} w={96}>STRATEGY</Banner>
        <BinsChart gx0={799} gx1={1247} gy0={67} step={40} pct={28} tableX={706} rh={19} px={[855, 966, 1079, 1190]} py={[92, 313, 325, 333]} bars={[240, 34, 20, 14]} bw={36}
          labels={[[875, 77], [985, 292], [1093, 301], [1209, 304]]} title={993} titleY={54} lblX={746} binX={1021} binY={409} ax={206} />
        {Array.from({ length: 10 }, (_, i) => (
          <g key={i}><path d={`M136 ${431 + i * 28.500}H571`} stroke={GRID} strokeWidth="2.500" /><T x={124} y={431 + i * 28.500} a="end" s={12} w={i === 9 ? 6 : i > 4 ? 30 : 36}>{180000 - i * 20000}</T></g>
        ))}
        {Array.from({ length: 8 }, (_, i) => <T key={i} x={582} y={431 + i * 36.500} a="start" s={12} w={i === 7 ? 6 : i === 6 ? 26 : 31}>{35000 - i * 5000}</T>)}
        {x.map((v, i) => <g key={v}><rect x={v - 22} y={top[i]} width={44} height={687 - top[i]} fill={colors[i]} /><T x={v} y={[442, 437, 449, 443][i]} s={12} w={38}>{['163526', '167994', '159256', '160609'][i]}</T><T x={v} y={705} s={12}>{i + 1}</T></g>)}
        <polyline points={x.map((v, i) => `${v},${ly[i]}`).join(' ')} fill="none" stroke={DARK} strokeWidth="4" strokeDasharray="11 6" />
        {x.map((v, i) => <g key={v}><circle cx={v} cy={ly[i]} r="5.500" fill="#999" /><T x={v + 10} y={ly[i] + 1} a="start" s={12} w={i ? 27 : 31} f="#333">{['29923', '4213', '2401', '1646'][i]}</T></g>)}
        <T x={314} y={411} s={18} w={118}>Bins Total Chart</T>
        <T x={74} y={560} s={13} w={26} r={-90} f="#444">Case</T>
        <rect x={247} y={713} width={33} height={6} fill="#eee" /><T x={284} y={716} a="start" s={13} w={24}>total</T>
        <path d="M322 716h34" stroke={DARK} strokeWidth="3" strokeDasharray="12 6" /><circle cx="339" cy="716" r="3.500" fill="#999" /><T x={359} y={716} a="start" s={13} w={47}>Bad Case</T><T x={352} y={725} s={12} w={16}>Bin</T>

        {Array.from({ length: 6 }, (_, i) => (
          <g key={i}><path d={`M787 ${452 + i * 45}H1270`} stroke={GRID} strokeWidth="2.500" /><T x={755} y={452 + i * 45} s={13} w={47}>{`0.00${25 - i * 5 < 10 ? '0' : ''}${25 - i * 5} %`}</T></g>
        ))}
        <path d="M787 452V680" stroke="#bbb" strokeWidth="2.500" />
        {Array.from({ length: 10 }, (_, i) => <T key={i} x={787 + i * 53.500} y={692} s={12} w={i ? 19 : 6}>{i * 100}</T>)}
        <T x={982} y={435} s={17} w={154}>Score concentration</T>
        {CLOUD.map(([s, d], i) => <circle key={i} cx={787 + s * 0.5356} cy={675 - d * 208} r="5" fill={s < 636 ? RED : s < 695 ? PINK : s < 722 ? MID : DEEP} />)}
        {['Bin 1', 'Bin 2', 'Bin 3', 'Bin 4'].map((t, i) => <g key={t}><circle cx={932 + i * 46.500} cy={716} r="5" fill={colors[i]} /><T x={939 + i * 46.500} y={716} a="start" s={12} w={25}>{t}</T></g>)}
      </Art>
      <Box x={76} y={88} w={428} h={58} bg={LIGHT} size={19} lh={24} pt={5} bold lines={[['phân loại hợp đồng vào 4 nhóm  theo score, mỗi', 381], ['nhóm chiếm khoảng 25% tổng số lượng hợp đồng', 395]]} />
      <Grid x={78} y={183} cols={[81, 84, 84, 81, 84]} bg={LIGHT} align="all" hh={22} rh={22.400} head={['bin', 'Case', '%total', 'Bad Case', 'Bad rate']} rows={[
        ['1', '163526', '25.1%', '29923', '18.30%'], ['2', '167994', '25.8%', '4213', '2.51%'], ['3', '159256', '24.4%', '2401', '1.51%'], ['4', '160609', '24.7%', '1646', '1.02%'],
      ]} />
    </Canvas>
  );
}

function Slide9() {
  const x = Array.from({ length: 16 }, (_, i) => 728 + i * 29.9);
  const y = [421, 430, 449, 480, 525, 553, 571, 586, 596, 595, 603, 620, 626, 631, 634, 636];
  const h = [15, 10, 15, 12, 10, 15, 16, 12, 10, 22, 34, 42, 73, 142, 235, 217];
  const l = ['51.2%', '49.2%', '44.6%', '37.5%', '26.8%', '20.3%', '16.2%', '12.8%', '10.3%', '10.6%', '8.6%', '4.8%', '3.3%', '2.3%', '1.6%', '1.0%'];
  return (
    <Canvas ox={15} oy={12}>
      <Art>
        <Banner x={47} y={12} w={96}>STRATEGY</Banner>
        <BinsChart gx0={715} gx1={1196} gy0={65} step={32.700} pct={22.900} tableX={622} rh={19.300} px={[776, 896, 1015, 1134]} py={[84, 266, 277, 283]} bars={[196, 27, 16, 10]} bw={38}
          labels={[[793, 72], [914, 250], [1031, 254], [1155, 259]]} title={924} titleY={54} lblX={662} binX={955} binY={365} ax={179} />
        {Array.from({ length: 10 }, (_, i) => (
          <g key={i}><path d={`M713 ${384 + i * 28.400}H1190`} stroke={GRID} strokeWidth="2.500" /><T x={702} y={384 + i * 28.400} a="end" s={12} w={i === 9 ? 6 : i === 8 ? 30 : 36}>{450000 - i * 50000}</T></g>
        ))}
        {Array.from({ length: 7 }, (_, i) => <T key={i} x={1203} y={384 + i * 42.700} a="start" s={12} w={i === 6 ? 16 : 23}>{`${60 - i * 10}%`}</T>)}
        {x.map((v, i) => <rect key={i} x={i < 12 ? v - 8 : v - 3} y={640 - h[i]} width={i < 12 ? 9 : 11} height={h[i]} fill={i < 12 ? RED : DEEP} />)}
        <polyline points={x.map((v, i) => `${v},${y[i]}`).join(' ')} fill="none" stroke={DARK} strokeWidth="3.500" />
        {x.map((v, i) => <g key={i}><circle cx={v} cy={y[i]} r="5" fill={DARK} /><T x={v + 2} y={y[i] - 17} s={12} w={i > 9 ? 26 : 31}>{l[i]}</T><T x={v + 2} y={655} a="end" s={12} w={42} r={-50} f="#555">{BANDS[i]}</T></g>)}
        <rect x={846} y={705} width={27} height={8} fill={RED} /><T x={876} y={707} a="start" s={13} w={18}>Call</T>
        <rect x={906} y={705} width={30} height={8} fill={DEEP} /><T x={937} y={707} a="start" s={13} w={36}>No Call</T>
        <path d="M983 709h28" stroke={DARK} strokeWidth="3" /><circle cx="997" cy="709" r="5" fill={DARK} /><T x={1013} y={707} a="start" s={13} w={43}>Bad rate</T>
      </Art>
      <Box x={87} y={123} w={457} h={81} bg={TEAL} size={19} lh={23} pt={6} bold lines={[['Bin 2, 3, 4 có Tỷ lệ Bad rate rất thấp 2.51% ,1.51% và', 411], ['1.02%.  Do đó bin 2, 3, 4 được đề suất đưa vào nhóm', 419], ['No Call.', 62]]} />
      <Box x={87} y={243} w={457} h={57} bg={PINK} size={19} lh={22} pt={7} bold lines={[['Bin 1 có Tỷ lệ Bad rate cao nhất 18.30%.  Do đó bin 1', 411], ['được đề suất đưa vào nhóm Call', 260]]} />
      <Box x={87} y={450} w={457} h={57} bg={LIGHT} size={19} lh={22} pt={7} bold lines={[['Với chiến lược trên, danh mục Call sẽ chỉ chiếm 25%', 412], ['tổng số Case , Các case Call sẽ có điểm số <= 636', 379]]} />
    </Canvas>
  );
}

const SLIDES = [Slide1, Slide2, Slide3, Slide4, Slide5, Slide6, Slide7, Slide8, Slide9];

function Page({ index }: { index: number }) {
  const S = SLIDES[index];
  return (
    <div className="h-[245px] w-[435px] overflow-clip bg-white shadow-[0_2px_5px_rgba(0,0,0,0.5)]">
      <div className="h-[735px] w-[1305px] origin-top-left scale-[0.333334]"><S /></div>
    </div>
  );
}

/* ---------- dock ---------- */

function DockItem({ dots, active, children }: { dots: number; active?: boolean; children: React.ReactNode }) {
  return (
    <div className={`relative ml-[2px] flex h-[40px] w-[40px] items-center justify-center rounded-[3px] ${active ? 'bg-[#6b5659]' : ''}`}>
      <div className="absolute top-0 left-0 flex h-full flex-col items-center justify-center gap-[1.500px]">
        {Array.from({ length: dots }, (_, i) => <span key={i} className="h-[4px] w-[4px] rounded-full bg-[#e95420]" />)}
      </div>
      <svg width="26" height="26" viewBox="0 0 26 26">{children}</svg>
    </div>
  );
}

function Dock() {
  return (
    <nav className="flex w-[45px] shrink-0 flex-col gap-[2px] bg-linear-to-b from-[#54383b] via-[#47343a] to-[#3d302f] pt-px">
      <DockItem dots={4}>
        <defs>
          <linearGradient id="ff" x1=".8" y1="0" x2=".2" y2="1"><stop offset="0" stopColor="#fff44f" /><stop offset=".4" stopColor="#ff980e" /><stop offset=".75" stopColor="#ff3647" /><stop offset="1" stopColor="#e31587" /></linearGradient>
        </defs>
        <path d="M16 1c1 2 4 4 6.500 7C28 16 23 25.500 13 25.500 5 25.500.5 19 1 12.500c.2-3 1.200-5 2.500-7L5 8l3-1c1 1 2 1 3 1 1-4 3-5.500 5-7Z" fill="url(#ff)" />
        <circle cx="13" cy="14" r="5.500" fill="#7542e5" />
        <path d="M4 10c4-3 7-.5 9 0-2 1-3 2-3.500 3.500C7 14 5 12 4 10Z" fill="#ffbd4f" />
        <path d="M16 1c1 2 4 4 6.500 7 1.500 2.500 2 5 1.500 8-1-3-3-5-5-6-3-2-5-5-3-9Z" fill="#fff03f" />
      </DockItem>
      <DockItem dots={1}>
        <rect x="1.500" y="1" width="23" height="24" rx="2" fill="#a8a8a6" /><rect x="2" y="1" width="22" height="4" rx="1" fill="#8b8b88" />
        <rect x="3.500" y="5" width="19" height="6" fill="#5b2c12" /><rect x="4" y="6" width="18" height="1.500" fill="#f57900" /><rect x="4" y="8" width="18" height="3" fill="#f6ece2" />
        <path d="M1.500 11h23v12a2 2 0 0 1-2 2h-19a2 2 0 0 1-2-2Z" fill="#b9b9b7" /><rect x="9" y="16" width="8" height="6" rx="1" fill="#eee" stroke="#777" /><rect x="10.500" y="18.500" width="5" height="2" fill="#555" />
      </DockItem>
      <DockItem dots={0}>
        <path d="M9 4V1h8v3" fill="none" stroke="#c83f16" strokeWidth="2" /><rect x="1" y="3.500" width="24" height="22" rx="1.500" fill="#f07a45" /><rect x="1" y="3.500" width="24" height="3" fill="#d9501f" />
        <path d="M8.500 20 13 10.500 17.500 20M9.500 17h7" stroke="#fff" strokeWidth="2.400" fill="none" />
      </DockItem>
      <DockItem dots={0}>
        <circle cx="13" cy="13" r="12" fill="#4583c4" stroke="#2d5f98" /><path d="M8.500 9.500c.3-5.500 9-5.500 9 0 0 3.500-4.500 3.500-4.500 7.500" stroke="#fff" strokeWidth="2.600" fill="none" /><circle cx="13" cy="20.500" r="1.700" fill="#fff" />
      </DockItem>
      <DockItem dots={3} active>
        <rect x="2" y="1.500" width="22" height="23" rx="2" fill="#f5f5f4" stroke="#ccc" />
        <path d="M4 15.500C8 14.500 15 10 15 6.500 15 3 8.500 3.500 6.500 7.500c-2 4 0 7.500 4 7.500 4.500 0 7.500-3.500 13-4.500" stroke="#d9303a" strokeWidth="1.400" fill="none" />
        <path d="M5 19.500h16M5 21.500h12" stroke="#ccc" />
      </DockItem>
      <DockItem dots={1}>
        <path d="M3 .5h13L24 8v17.500H3Z" fill="#f6f3ee" stroke="#a4471d" /><path d="M15 .5h8.500V8Z" fill="#8a3404" /><rect x="6" y="9" width="15" height="10" fill="#e69a77" /><path d="M8 12h5M8 14h5M13.500 19v3M10 23l3.500-3 3.500 3" stroke="#8b6453" /><rect x="14" y="11.500" width="5" height="5" fill="#cde0c0" />
      </DockItem>
      <DockItem dots={4}>
        <rect x="1" y="3" width="24" height="20" rx="1.500" fill="#c9cac5" /><rect x="2.500" y="4.500" width="21" height="17" fill="#2b2e30" /><path d="m5.500 8 4 2.500-4 2.500" stroke="#fff" strokeWidth="1.600" fill="none" /><path d="M10.500 14h4" stroke="#fff" strokeWidth="1.500" />
      </DockItem>
      <DockItem dots={1}>
        <rect x="1" y="3" width="16" height="14" transform="rotate(-12 8 10)" fill="#e9ede4" stroke="#999" /><path d="m4 14 4-5 5 6Z" fill="#74a848" /><circle cx="14.500" cy="12" r="7" fill="#7ea3bd" fillOpacity=".8" stroke="#d8d8d8" strokeWidth="1.800" /><path d="m20 18 4.500 4.500" stroke="#c58b1b" strokeWidth="3.500" strokeLinecap="round" />
      </DockItem>
      <div className="mt-auto mb-[13px] ml-[14px] grid w-[16px] grid-cols-3 gap-[3.500px]">
        {Array.from({ length: 9 }, (_, i) => <span key={i} className="h-[3px] w-[3px] rounded-full bg-white" />)}
      </div>
    </nav>
  );
}

/* ---------- window chrome ---------- */

function TopBar() {
  return (
    <header className="grid h-[27px] grid-cols-3 items-center bg-linear-to-b from-[#58544c] to-[#403f3a] text-[14.500px] font-semibold text-[#dfdbd2]">
      <div className="flex items-center pl-[12px]">
        <Fit w={68}>Activities</Fit>
        <svg className="ml-[20px]" width="16" height="16" viewBox="0 0 16 16"><rect width="16" height="16" rx="1.500" fill="#f5f5f4" /><path d="M2 9.500c3-.5 7.500-3.500 7.500-6 0-2-4-1.500-5 1-1.300 2.500 0 5 2.500 5S12 8 15 7.500" stroke="#d9202c" strokeWidth="1.300" fill="none" /><path d="M2 12.500h11" stroke="#ccc" /></svg>
        <span className="ml-[7px] font-bold"><Fit w={129}>Document Viewer</Fit></span>
        <svg className="ml-[5px]" width="10" height="5"><path d="M0 0h10L5 5Z" fill="#c8c5bd" /></svg>
      </div>
      <div className="pl-[46px] text-center font-bold"><Fit w={61}>CN 21:37</Fit></div>
      <div className="flex items-center justify-end pr-[15px]">
        <Fit w={12}>vi</Fit>
        <svg className="mr-[31px] ml-[8px]" width="10" height="5"><path d="M0 0h10L5 5Z" fill="#c8c5bd" /></svg>
        <svg width="16" height="16" fill="#cfccc5"><path d="M5 0h5v5H5ZM0 10h5v5H0ZM10 10h5v5h-5Z" /><path d="M7.500 5v2.500M2.500 10V7.500h10V10" stroke="#cfccc5" fill="none" /></svg>
        <svg className="ml-[11.500px]" width="16" height="16" fill="none" stroke="#a09d96" strokeWidth="1.300"><path d="M0 5h3l4-4v13l-4-4H0Z" fill="#dfdbd2" stroke="none" /><path d="M8.500 5c1.500 1.500 1.500 4 0 5.500M10.500 3c2.500 3 2.500 6.500 0 9.500M12.500 1c4 4 4 9 0 13" /></svg>
        <svg className="ml-[14px]" width="13" height="17" fill="none"><path d="M1 3h2.500V1h6v2H12v13H1Z" stroke="#96938c" strokeWidth="2" /><path d="M8 4.500 3.500 9.500H6L5 14l4.500-5H7Z" fill="#dfdbd2" /></svg>
        <svg className="ml-[12px]" width="10" height="5"><path d="M0 0h10L5 5Z" fill="#c8c5bd" /></svg>
      </div>
    </header>
  );
}

const BTN = 'flex items-center justify-center rounded-[4px] border border-[#34332f] shadow-[inset_0_1px_0_#55534b,0_1px_0_#5c5951]';

function HeaderBar() {
  return (
    <div className="relative flex h-[40px] shrink-0 items-center bg-linear-to-b from-[#3b3a36] to-[#56534a] pl-[9px]">
      <div className="flex h-[34px] w-[75px] overflow-hidden rounded-[4px] bg-[#f6f6f5] text-[15px] leading-[33px] shadow-[0_0_0_1px_#33322e]">
        <span className="w-[28px] border-r border-[#ccc] bg-white pl-[6px] text-[#3c3c3c]">5</span>
        <span className="pl-[8px] text-[#8b8b8a]"><Fit w={26}>of 9</Fit></span>
      </div>
      <div className={`${BTN} ml-[15px] h-[33px] w-[66px] gap-[26px]`}>
        <svg width="8" height="14" fill="none" stroke="#8e8c84" strokeWidth="2.200"><path d="M7 1 1.500 7 7 13" /></svg>
        <svg width="8" height="14" fill="none" stroke="#8e8c84" strokeWidth="2.200"><path d="m1 1 5.500 6L1 13" /></svg>
      </div>
      <div className={`${BTN} ml-[14px] h-[33px] w-[34px]`}>
        <svg width="16" height="16" fill="none" stroke="#dfdbd2"><circle cx="6.500" cy="6" r="4.800" strokeWidth="2.300" /><path d="m10 9.500 5 5" strokeWidth="2.800" /></svg>
      </div>
      <div className={`${BTN} ml-[14px] h-[33px] w-[34px]`}>
        <svg width="14" height="17" fill="none" stroke="#dfdbd2"><path d="M2 3v12.500h10.500V3" strokeWidth="2" /><path d="M2.500 0v4M5 0v4M7.500 0v4M10 0v4M12.500 0v4" strokeWidth="1.200" /><path d="M4 7.500h7M4 10h7M4 12.500h5" strokeWidth="1.300" /></svg>
      </div>
      <div className="pointer-events-none absolute inset-0 flex flex-col items-center">
        <span className="mt-[2px] text-[14.500px] leading-[20px] font-bold text-[#dfdbd2]"><Fit w={180}>PowerPoint Presentation</Fit></span>
        <span className="text-[12px] leading-[14px] text-[#918f87]"><Fit w={61}>card(1).pdf</Fit></span>
      </div>
      <div className="mr-[8px] ml-auto flex items-center">
        <div className="flex h-[26px] w-[92px] items-center justify-between rounded-[3px] bg-[#fbfbfb] pr-[7px] pl-[6px] text-[14.500px] text-[#4a4a4a] shadow-[0_0_0_1px_#2e2d2a]">
          <Fit w={28}>34%</Fit>
          <svg width="14" height="9" fill="none" stroke="#444" strokeWidth="2.400"><path d="m1.500 1.500 5.500 5.500 5.500-5.500" /></svg>
        </div>
        <div className={`${BTN} ml-[15px] h-[33px] w-[34px]`}>
          <svg width="14" height="16" fill="none"><path d="M12 7V4.500L8.500 1.500H2V14h4" stroke="#dfdbd2" strokeWidth="2" /><path d="m9 10.500 4 4.500M6 8.500c0 3 2.500 3.500 4 2.500s1-3.500-.5-4" stroke="#dfdbd2" strokeWidth="2" /></svg>
        </div>
        <div className={`${BTN} ml-[8px] h-[33px] w-[34px]`}>
          <svg width="10" height="11" fill="#e6e3da"><path d="M0 0h10v2H0ZM0 4.300h10v2H0ZM0 8.600h10v2H0Z" /></svg>
        </div>
        <div className="mx-[7px] h-[28px] w-px bg-[#403f3a]" />
        <div className="flex gap-[4px]">
          <svg width="16" height="16"><circle cx="8" cy="8" r="7.500" fill="#7c7a73" stroke="#3b3a36" /><path d="M4 8.500h8" stroke="#3b3a36" strokeWidth="1.300" /></svg>
          <svg width="16" height="16"><circle cx="8" cy="8" r="7.500" fill="#7c7a73" stroke="#3b3a36" /><rect x="4.500" y="5.500" width="7" height="5" fill="none" stroke="#3b3a36" strokeWidth="1.200" /></svg>
          <svg width="16" height="16"><circle cx="8" cy="8" r="7.500" fill="#ea5a2b" stroke="#8d2f12" /><path d="m5 5 6 6M11 5l-6 6" stroke="#4d2213" strokeWidth="1.300" /></svg>
        </div>
      </div>
    </div>
  );
}

function Sidebar() {
  return (
    <aside className="flex w-[156px] shrink-0 flex-col border-r-2 border-[#cbc7c4] bg-white">
      <div className="flex h-[41px] shrink-0 items-center bg-[#f2f1f0] pl-[15px] text-[15px] text-[#4c4c4c]">
        <Fit w={60}>Thumb…</Fit>
        <svg className="ml-[16px]" width="12" height="8" fill="none" stroke="#444" strokeWidth="2.200"><path d="m1 1.500 5 4.500 5-4.500" /></svg>
        <svg className="ml-[27px]" width="6" height="6" stroke="#444" strokeWidth="1.300"><path d="m.5.5 5 5M5.500.5l-5 5" /></svg>
      </div>
      <div className="h-[3px] shrink-0 border-y border-[#cbc7c4] bg-[#f2f1f0]" />
      <div className="flex flex-col gap-[6px] pt-[6px] pl-[6px]">
        {SLIDES.map((S, i) => (
          <div key={i} className={`flex h-[91px] w-[114px] flex-col items-center rounded-[4px] pt-[6px] ${i === 4 ? 'bg-linear-to-b from-[#f07746] to-[#e66637] text-white shadow-[inset_0_0_0_1px_#d4592b]' : 'text-[#3c3c3c]'}`}>
            <div className="h-[58px] w-[102px] overflow-clip border border-black">
              <div className="h-[735px] w-[1305px] origin-top-left scale-[0.07663]"><S /></div>
            </div>
            <span className="pl-[2px] text-[15px] leading-[20px] italic">{i + 1}</span>
          </div>
        ))}
      </div>
    </aside>
  );
}

export default function App() {
  return (
    <div className="flex h-[1080px] w-[1920px] flex-col overflow-hidden bg-[#f2f1f0] font-['Noto_Sans',sans-serif]">
      <TopBar />
      <div className="flex min-h-0 flex-1">
        <Dock />
        <div className="flex min-w-0 flex-1 flex-col">
          <HeaderBar />
          <div className="flex min-h-0 flex-1">
            <Sidebar />
            <main className="min-w-0 flex-1 overflow-hidden pl-[419px]">
              <div className="-mt-[19px] grid grid-cols-[435px_435px] grid-rows-[258px_259px_259px_245px] gap-x-[12px]">
                {[2, 3, 4, 5, 6, 7, 8].map((i) => <Page key={i} index={i} />)}
              </div>
            </main>
          </div>
        </div>
      </div>
    </div>
  );
}
